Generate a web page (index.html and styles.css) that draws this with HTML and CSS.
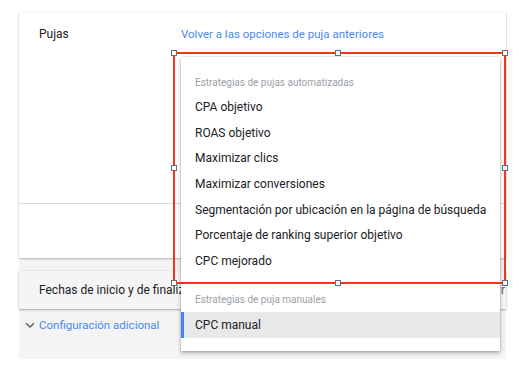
FILE: index.html
```html
<!DOCTYPE html>
<html lang="es">
<head>
<meta charset="utf-8">
<link rel="stylesheet" href="styles.css">
</head>
<body>
<div class="page">
  <div class="card">
    <div class="row">
      <div class="label">Pujas</div>
      <a class="link">Volver a las opciones de puja anteriores</a>
    </div>
    <div class="divider"></div>
  </div>
  <div class="gray">
    <div class="dates">
      <span>Fechas de inicio y de finalización</span>
      <span class="right">Definir</span>
    </div>
    <div class="extra">
      <svg class="chev" width="10" height="7" viewBox="0 0 10 7"><path d="M1 1.2 L5 5 L9 1.2" fill="none" stroke="#5f6368" stroke-width="1.5"/></svg>
      <a class="link">Configuración adicional</a>
    </div>
  </div>

  <div class="menu">
    <div class="header">Estrategias de pujas automatizadas</div>
    <div class="item">CPA objetivo</div>
    <div class="item">ROAS objetivo</div>
    <div class="item">Maximizar clics</div>
    <div class="item">Maximizar conversiones</div>
    <div class="item">Segmentación por ubicación en la página de búsqueda</div>
    <div class="item">Porcentaje de ranking superior objetivo</div>
    <div class="item">CPC mejorado</div>
    <div class="header second">Estrategias de puja manuales</div>
    <div class="item selected">CPC manual</div>
  </div>

  <div class="select">
    <span class="h tl"></span><span class="h tc"></span><span class="h tr"></span>
    <span class="h ml"></span><span class="h mr"></span>
    <span class="h bl"></span><span class="h bc"></span><span class="h br"></span>
  </div>
</div>
</body>
</html>
```

FILE: styles.css
```css
* { box-sizing: border-box; }
html, body { margin: 0; background: #fff; }
body {
  font-family: Roboto, "Noto Sans", Arial, sans-serif;
  color: #202124;
  width: 520px;
  height: 374px;
  overflow: hidden;
}
.page {
  position: relative;
  padding: 12px 0 0 19px;
  width: 506px;
}
.card {
  background: #fff;
  height: 246px;
  box-shadow: 0 1px 2px rgba(0,0,0,.25), 0 0 1px rgba(0,0,0,.15);
  display: flex;
  flex-direction: column;
  position: relative;
  z-index: 1;
}
.row {
  display: flex;
  align-items: center;
  height: 43px;
  font-size: 12px;
}
.label { width: 162px; padding-left: 20px; }
.link { color: #4a88ee; font-size: 11.5px; text-decoration: none; }
.divider {
  margin-top: 148px;
  height: 1px;
  background: #dadada;
}
.gray {
  background: #f4f4f4;
  height: 101px;
  padding-top: 13px;
}
.dates {
  height: 38px;
  background: #f5f5f5;
  box-shadow: 0 1px 2px rgba(0,0,0,.3), 0 0 1px rgba(0,0,0,.12);
  display: flex;
  align-items: center;
  justify-content: space-between;
  padding: 0 1px 0 20px;
  font-size: 12px;
  color: #202124;
}
.right { color: #5f6368; }
.extra {
  display: flex;
  align-items: center;
  height: 32px;
  padding-left: 6px;
  gap: 4px;
}
.chev { display: block; }
.menu {
  position: absolute;
  left: 181px;
  top: 57px;
  width: 319px;
  height: 294px;
  background: #fff;
  box-shadow: 0 2px 4px rgba(0,0,0,.3), 0 0 2px rgba(0,0,0,.15);
  padding-top: 14px;
  z-index: 2;
}
.header {
  height: 24px;
  line-height: 24px;
  font-size: 10px;
  color: #9aa0a6;
  padding-left: 14px;
}
.header.second { margin-top: 13px; }
.item {
  height: 25.7px;
  line-height: 25.7px;
  font-size: 12px;
  padding-left: 14px;
  color: #202124;
  white-space: nowrap;
}
.item.selected {
  height: 26px;
  line-height: 26px;
  background: #e8e8e8;
  border-left: 3px solid #4285f4;
  padding-left: 11px;
}
.select {
  position: absolute;
  left: 173px;
  top: 52px;
  width: 333px;
  height: 232px;
  border: 2px solid #f4331f;
  z-index: 3;
}
.h {
  position: absolute;
  width: 6px;
  height: 6px;
  background: #fff;
  border: 1px solid #6d6d6d;
}
.tl { left: -4px; top: -4px; }
.tc { left: 160px; top: -4px; }
.tr { right: -4px; top: -4px; }
.ml { left: -4px; top: 111px; }
.mr { right: -4px; top: 111px; }
.bl { left: -4px; bottom: -4px; }
.bc { left: 160px; bottom: -4px; }
.br { right: -4px; bottom: -4px; }
```
